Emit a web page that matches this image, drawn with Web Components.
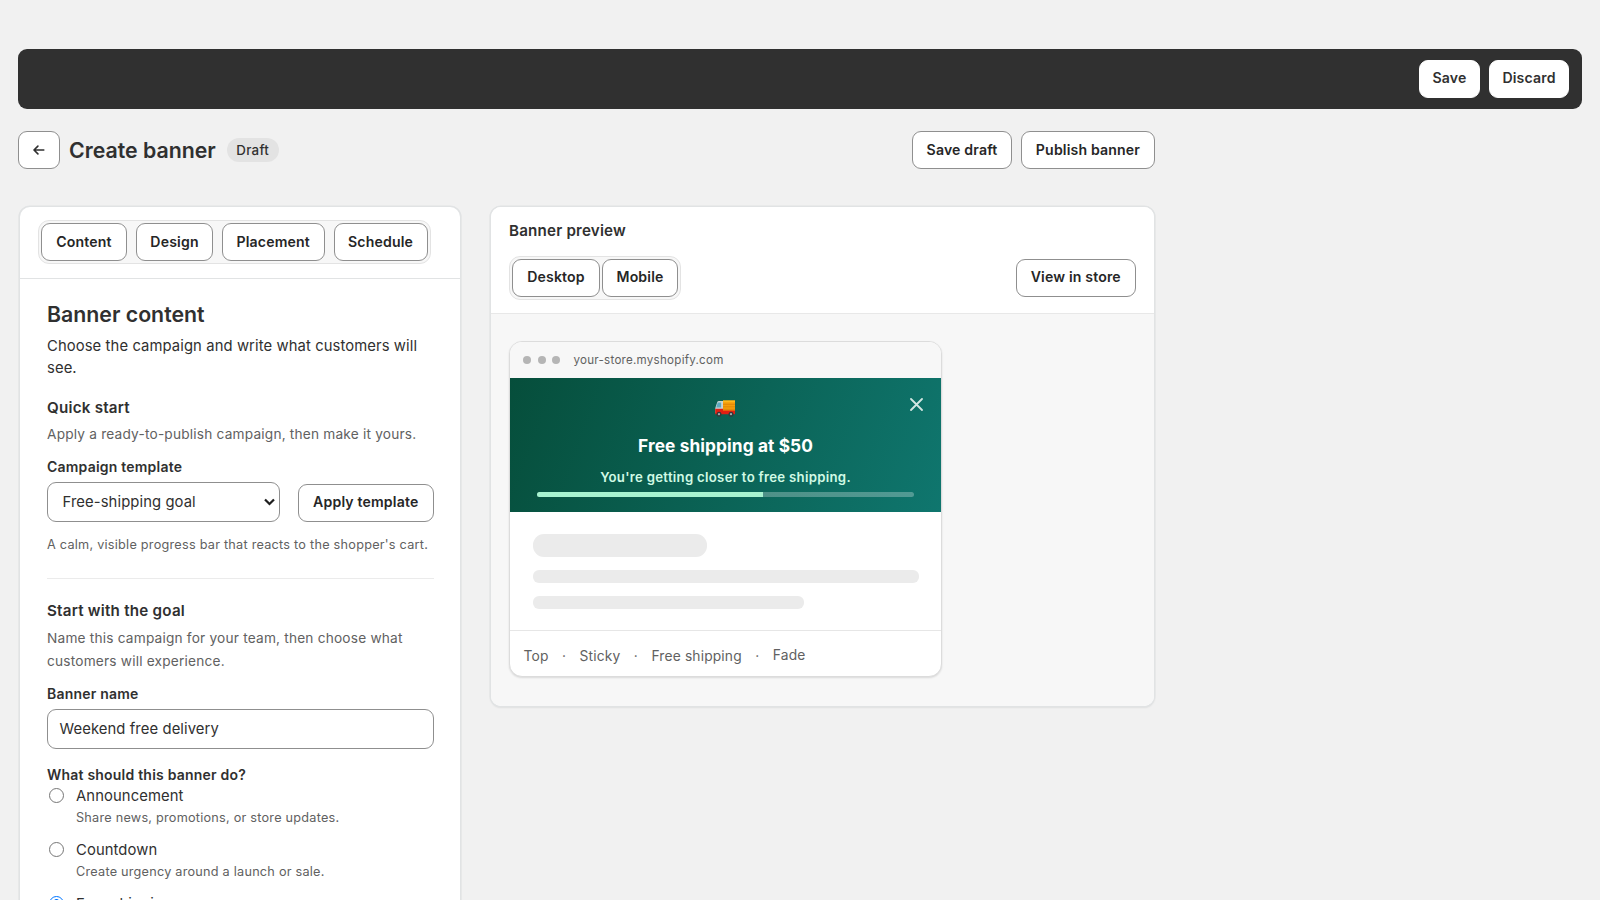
<!DOCTYPE html>
<html lang="en">
<head>
<meta charset="utf-8">
<title>Create banner</title>
<style>
    body {
        margin: 0;
        height: 900px;
        overflow: hidden;
        background: #f1f1f1;
        color: #303030;
        font: 400 14.8px/22px Inter, "Liberation Sans", sans-serif;
        letter-spacing: .1px;
    }
</style>
</head>
<body>
<banner-editor></banner-editor>

<script>
/**
 * Attaches an open shadow root with the given markup.
 */
class BaseElement extends HTMLElement {
    constructor() {
        super();
        this.attachShadow({ mode: 'open' });
    }

    connectedCallback() {
        this.shadowRoot.innerHTML = this.template();
    }
}

/**
 * Push button. Use the "plain" attribute on dark surfaces.
 */
class UiButton extends BaseElement {
    template() {
        return `
            <style>
                :host { display: block; flex: none; }
                button {
                    box-sizing: border-box;
                    display: flex;
                    align-items: center;
                    justify-content: center;
                    width: 100%;
                    height: 38px;
                    margin: 0;
                    padding: 0 0 1px;
                    border: 1px solid #8f8f8f;
                    border-radius: 9px;
                    background: #fff;
                    color: #262626;
                    font: 600 14.1px/20px Inter, "Liberation Sans", sans-serif;
                    letter-spacing: .16px;
                    white-space: nowrap;
                }
                :host([plain]) button { border-color: #fff; color: #303030; padding-bottom: 2px; }
            </style>
            <button type="button"><slot></slot></button>
        `;
    }
}

/**
 * Rounded track that groups buttons.
 */
class ButtonGroup extends BaseElement {
    template() {
        return `
            <style>
                :host {
                    box-sizing: border-box;
                    display: flex;
                    width: max-content;
                    height: 44px;
                    padding: 2px;
                    gap: var(--group-gap, 9px);
                    border: 1px solid #e3e3e3;
                    border-radius: 11px;
                    background: #f7f7f7;
                }
            </style>
            <slot></slot>
        `;
    }
}

/**
 * Dark bar with the unsaved changes actions.
 */
class SaveBar extends BaseElement {
    template() {
        return `
            <style>
                :host {
                    box-sizing: border-box;
                    display: flex;
                    align-items: center;
                    justify-content: flex-end;
                    gap: 9px;
                    height: 60px;
                    padding: 0 13px 0 0;
                    border-radius: 9px;
                    background: #303030;
                }
            </style>
            <ui-button plain style="width:61px">Save</ui-button>
            <ui-button plain style="width:80px">Discard</ui-button>
        `;
    }
}

/**
 * Page title row.
 */
class PageHeader extends BaseElement {
    template() {
        return `
            <style>
                :host { display: flex; align-items: center; height: 38px; }
                svg { display: block; }
                h1 {
                    margin: 0 0 0 9px;
                    font-size: 21.3px;
                    line-height: 28px;
                    font-weight: 600;
                    letter-spacing: 0;
                }
                .badge {
                    margin-left: 11px;
                    padding: 0 9.5px;
                    height: 24px;
                    border-radius: 12px;
                    background: #e3e3e3;
                    font-size: 13.3px;
                    line-height: 24px;
                    font-weight: 500;
                    letter-spacing: .3px;
                }
                .actions { display: flex; gap: 9px; margin-left: auto; }
            </style>
            <ui-button style="width:42px">
                <svg width="12" height="10" viewBox="0 0 12 10" fill="none" stroke="#303030" stroke-width="1.6" stroke-linecap="round" stroke-linejoin="round"><path d="M10.800 5H1.200M4.900 1.100 1 5l3.900 3.900"/></svg>
            </ui-button>
            <h1>Create banner</h1>
            <span class="badge">Draft</span>
            <div class="actions">
                <ui-button style="width:100px">Save draft</ui-button>
                <ui-button style="width:134px">Publish banner</ui-button>
            </div>
        `;
    }
}

/**
 * White surface with a thin outline.
 */
class UiCard extends BaseElement {
    template() {
        return `
            <style>
                :host {
                    display: block;
                    overflow: hidden;
                    border-radius: 10px;
                    background: #fff;
                    box-shadow: 0 0 0 1.5px #e1e3e4, 0 1px 2px 1px rgba(0, 0, 0, .07);
                }
            </style>
            <slot></slot>
        `;
    }
}

/**
 * Radio option with a label and a description.
 */
class RadioOption extends BaseElement {
    template() {
        return `
            <style>
                :host { display: flex; height: 54.2px; }
                .dot {
                    flex: none;
                    box-sizing: border-box;
                    width: 15px;
                    height: 15px;
                    margin: 3px 12px 0 2px;
                    border: 1.4px solid #767676;
                    border-radius: 50%;
                    background: #fff;
                }
                :host([checked]) .dot {
                    border-color: #0075ff;
                    background: radial-gradient(circle, #0075ff 4px, #fff 4.6px);
                }
                .text { flex: 1; }
                small {
                    display: block;
                    margin-top: 1px;
                    color: #616161;
                    font-size: 12.7px;
                    line-height: 20px;
                    letter-spacing: .23px;
                }
            </style>
            <span class="dot"></span>
            <div class="text">
                <slot></slot>
                <small>${this.getAttribute('description')}</small>
            </div>
        `;
    }
}

/**
 * Left hand form.
 */
class ContentPanel extends BaseElement {
    template() {
        return `
            <style>
                :host { display: block; }
                .tabs {
                    padding: 13.5px 18px 14px;
                    border-bottom: 1px solid #e1e3e4;
                }
                .form { padding: 21px 26.5px 0 27px; }
                h2, h3, p { margin: 0; }
                h2 { font-size: 21.3px; line-height: 28px; font-weight: 600; letter-spacing: 0; }
                h3 { font-size: 15.2px; line-height: 22px; font-weight: 600; letter-spacing: .22px; }
                .lead { margin-top: 7px; line-height: 22px; }
                .help { color: #616161; font-size: 13.7px; line-height: 22.5px; letter-spacing: .19px; }
                .label {
                    display: block;
                    font-size: 14px;
                    line-height: 22px;
                    font-weight: 600;
                    letter-spacing: .21px;
                }
                .row {
                    display: flex;
                    align-items: flex-end;
                    justify-content: space-between;
                    margin-top: 4px;
                }
                .select, .input {
                    box-sizing: border-box;
                    height: 40px;
                    border: 1px solid #8f8f8f;
                    border-radius: 9px;
                    background: #fff;
                    line-height: 38px;
                }
                .select {
                    display: flex;
                    align-items: center;
                    justify-content: space-between;
                    width: 233px;
                    padding: 0 4px 0 14.5px;
                }
                .input { margin-top: 4px; padding-left: 11.5px; }
                .small { color: #616161; font-size: 12.7px; line-height: 20px; letter-spacing: .24px; white-space: nowrap; }
                hr { margin: 23px 0 0; border: 0; border-top: 1px solid #ebebeb; }
            </style>
            <div class="tabs">
                <button-group>
                    <ui-button style="width:86px">Content</ui-button>
                    <ui-button style="width:77px">Design</ui-button>
                    <ui-button style="width:102.5px">Placement</ui-button>
                    <ui-button style="width:94px">Schedule</ui-button>
                </button-group>
            </div>
            <div class="form">
                <h2>Banner content</h2>
                <p class="lead">Choose the campaign and write what customers will see.</p>
                <h3 style="margin-top:18px">Quick start</h3>
                <p class="help" style="margin-top:4px">Apply a ready-to-publish campaign, then make it yours.</p>
                <span class="label" style="margin-top:10px">Campaign template</span>
                <div class="row">
                    <div class="select">
                        Free-shipping goal
                        <svg width="11" height="8" viewBox="0 0 11 8" fill="none" stroke="#1f1f1f" stroke-width="2.2"><path d="M1 1.4 5.5 6 10 1.4"/></svg>
                    </div>
                    <ui-button style="width:135.5px">Apply template</ui-button>
                </div>
                <p class="small" style="margin-top:13px">A calm, visible progress bar that reacts to the shopper's cart.</p>
                <hr>
                <h3 style="margin-top:21.5px">Start with the goal</h3>
                <p class="help" style="margin-top:5px">Name this campaign for your team, then choose what customers will experience.</p>
                <span class="label" style="margin-top:10.5px">Banner name</span>
                <div class="input">Weekend free delivery</div>
                <span class="label" style="margin-top:15px;line-height:21px">What should this banner do?</span>
                <radio-option description="Share news, promotions, or store updates.">Announcement</radio-option>
                <radio-option description="Create urgency around a launch or sale.">Countdown</radio-option>
                <radio-option checked description="Show progress toward free shipping.">Free shipping</radio-option>
            </div>
        `;
    }
}

/**
 * Storefront mock with the banner in it.
 */
class StorePreview extends BaseElement {
    template() {
        return `
            <style>
                :host {
                    box-sizing: border-box;
                    display: block;
                    width: 433px;
                    height: 336px;
                    overflow: hidden;
                    border: 1px solid #dcdcdc;
                    border-radius: 13px;
                    background: #fff;
                    box-shadow: 0 1px 2px rgba(0, 0, 0, .12);
                }
                .chrome {
                    display: flex;
                    align-items: center;
                    height: 36px;
                    padding-left: 13px;
                    background: #f7f7f7;
                    color: #616161;
                    font-size: 11.6px;
                    letter-spacing: .25px;
                }
                .chrome i {
                    width: 8px;
                    height: 8px;
                    margin-right: 6.5px;
                    border-radius: 50%;
                    background: #b5b5b5;
                }
                .url { margin-left: 7px; }
                .banner {
                    position: relative;
                    box-sizing: border-box;
                    height: 134px;
                    padding: 22px 27px 0;
                    background: linear-gradient(110deg, #064e3b, #0f766e);
                    color: #fff;
                    text-align: center;
                }
                .truck { display: block; margin: 0 auto; position: relative; left: -1px; }
                .title { margin-top: 17px; font-size: 17.3px; line-height: 24px; font-weight: 700; }
                .sub { margin-top: 9px; color: #d1fae5; font-size: 13.2px; line-height: 20px; font-weight: 600; letter-spacing: .29px; }
                .bar {
                    height: 4.5px;
                    margin-top: 5px;
                    overflow: hidden;
                    border-radius: 3px;
                    background: rgba(255, 255, 255, .28);
                }
                .bar b { display: block; width: 60%; height: 100%; background: #a7f3d0; }
                .close { position: absolute; top: 20px; right: 18px; }
                .page { padding: 22px 22px 0 22.5px; height: 96px; }
                .page div { background: #ebebeb; }
                .meta {
                    display: flex;
                    box-sizing: border-box;
                    height: 46px;
                    padding: 14px 0 0 13.5px;
                    border-top: 1px solid #e6e6e6;
                    color: #616161;
                    font-size: 13.8px;
                    letter-spacing: .16px;
                }
                .meta i { width: 31px; text-align: center; font-style: normal; }
            </style>
            <div class="chrome"><i></i><i></i><i></i><span class="url">your-store.myshopify.com</span></div>
            <div class="banner">
                <svg class="truck" width="20" height="17" viewBox="0 0 20 17">
                    <path d="M8 .5h12v13H8z" fill="#f59e0b"/>
                    <path d="M8 .5h12v1.700H8z" fill="#ffb91c"/>
                    <path d="M8 4.300h12M8 6.800h12M8 9.300h12" stroke="#d97f06" stroke-width=".8"/>
                    <path d="M2.200 2.200Q2.500 1 4 1h4v12H.200V9.500Q.200 8.200 .6 7z" fill="#c9d4d6"/>
                    <path d="M2.700 2.600h3.500v5H1.200z" fill="#5fa9bf"/>
                    <path d="M.200 8.700h7.800v1.800h12v3.800H.200z" fill="#e01e13"/>
                    <circle cx="4" cy="14.200" r="2.500" fill="#33393b"/><circle cx="4" cy="14.200" r="1.100" fill="#a5adb0"/>
                    <circle cx="16" cy="14.200" r="2.500" fill="#33393b"/><circle cx="16" cy="14.200" r="1.100" fill="#a5adb0"/>
                </svg>
                <div class="title">Free shipping at $50</div>
                <div class="sub">You're getting closer to free shipping.</div>
                <div class="bar"><b></b></div>
                <svg class="close" width="13" height="13" viewBox="0 0 13 13" stroke="#d3e6e2" stroke-width="1.8" stroke-linecap="round"><path d="m1 1 11 11M12 1 1 12"/></svg>
            </div>
            <div class="page">
                <div style="width:174.5px;height:22.5px;border-radius:11px"></div>
                <div style="height:12.5px;margin-top:13.5px;border-radius:6px"></div>
                <div style="width:271px;height:13px;margin-top:13px;border-radius:6px"></div>
            </div>
            <div class="meta">
                <span>Top</span><i>·</i><span>Sticky</span><i>·</i><span>Free shipping</span><i>·</i><span style="margin-top:-1px">Fade</span>
            </div>
        `;
    }
}

/**
 * Right hand preview card content.
 */
class PreviewPanel extends BaseElement {
    template() {
        return `
            <style>
                :host { display: block; height: 499.5px; background: #f7f7f7; }
                header {
                    box-sizing: border-box;
                    height: 107.5px;
                    padding: 13.5px 18px 0 18px;
                    border-bottom: 1px solid #e8e8e8;
                    background: #fff;
                }
                h3 { margin: 0 0 13.5px; font-size: 15.2px; line-height: 22px; font-weight: 600; letter-spacing: .18px; }
                .row { display: flex; align-items: center; justify-content: space-between; }
                button-group { --group-gap: 2px; }
                store-preview { margin: 27px 0 0 18px; }
            </style>
            <header>
                <h3>Banner preview</h3>
                <div class="row">
                    <button-group>
                        <ui-button style="width:88px">Desktop</ui-button>
                        <ui-button style="width:76px">Mobile</ui-button>
                    </button-group>
                    <ui-button style="width:120.5px">View in store</ui-button>
                </div>
            </header>
            <store-preview></store-preview>
        `;
    }
}

/**
 * Page shell.
 */
class BannerEditor extends BaseElement {
    template() {
        return `
            <style>
                :host { display: block; padding: 49px 18px 0; }
                page-header { width: 1137px; margin-top: 22px; }
                main {
                    display: grid;
                    grid-template-columns: 440px 663px;
                    align-items: start;
                    gap: 31px;
                    margin: 37.5px 0 0 2px;
                }
            </style>
            <save-bar></save-bar>
            <page-header></page-header>
            <main>
                <ui-card><content-panel></content-panel></ui-card>
                <ui-card><preview-panel></preview-panel></ui-card>
            </main>
        `;
    }
}

customElements.define('ui-button', UiButton);
customElements.define('button-group', ButtonGroup);
customElements.define('save-bar', SaveBar);
customElements.define('page-header', PageHeader);
customElements.define('ui-card', UiCard);
customElements.define('radio-option', RadioOption);
customElements.define('content-panel', ContentPanel);
customElements.define('store-preview', StorePreview);
customElements.define('preview-panel', PreviewPanel);
customElements.define('banner-editor', BannerEditor);
</script>
</body>
</html>
